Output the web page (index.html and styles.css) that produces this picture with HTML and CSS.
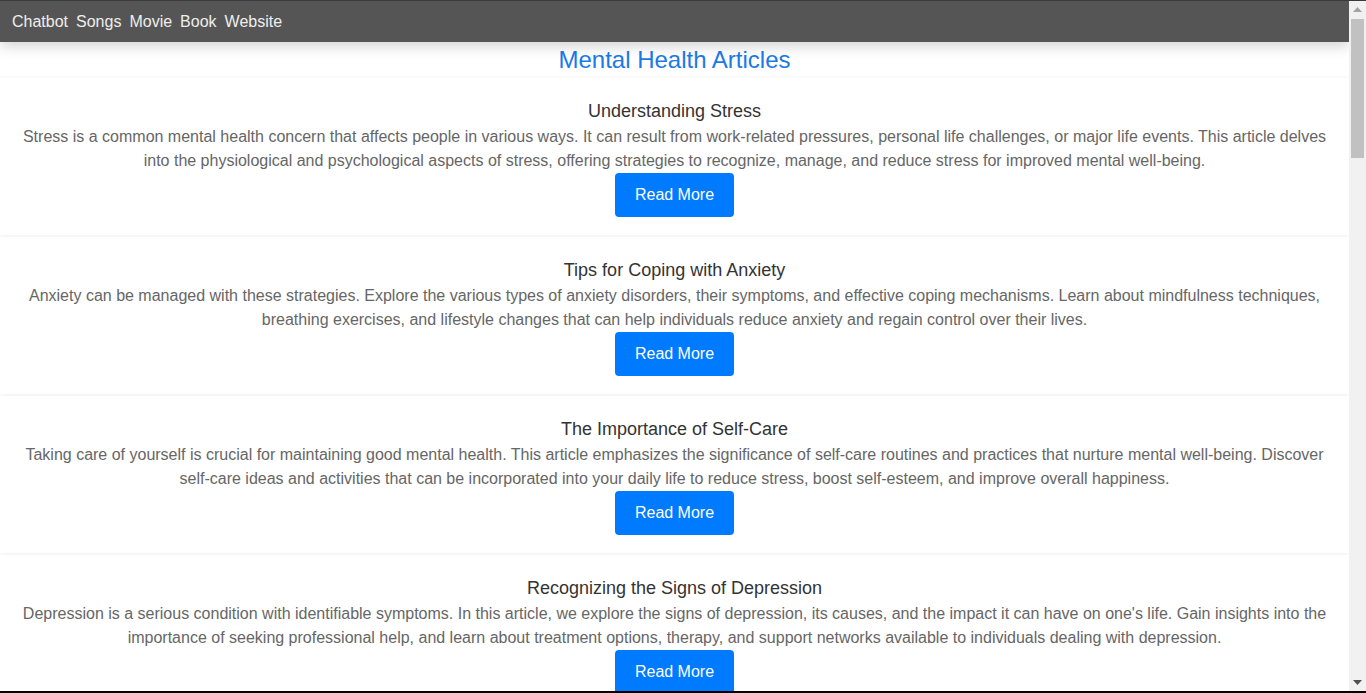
FILE: index.html
```html
<!DOCTYPE html>
<html lang="en">
<head>
<meta charset="utf-8">
<title>Mental Health Articles</title>
<link rel="stylesheet" href="styles.css">
</head>
<body>
<div class="frame">
<div class="viewport">
<nav class="navbar">
  <a href="#">Chatbot</a>
  <a href="#">Songs</a>
  <a href="#">Movie</a>
  <a href="#">Book</a>
  <a href="#">Website</a>
</nav>
<main class="content">
  <h1 class="page-title">Mental Health Articles</h1>
  <section class="article">
    <h3>Understanding Stress</h3>
    <p>Stress is a common mental health concern that affects people in various ways. It can result from work-related pressures, personal life challenges, or major life events. This article delves into the physiological and psychological aspects of stress, offering strategies to recognize, manage, and reduce stress for improved mental well-being.</p>
    <a class="btn" href="#">Read More</a>
  </section>
  <section class="article">
    <h3>Tips for Coping with Anxiety</h3>
    <p>Anxiety can be managed with these strategies. Explore the various types of anxiety disorders, their symptoms, and effective coping mechanisms. Learn about mindfulness techniques, breathing exercises, and lifestyle changes that can help individuals reduce anxiety and regain control over their lives.</p>
    <a class="btn" href="#">Read More</a>
  </section>
  <section class="article">
    <h3>The Importance of Self-Care</h3>
    <p>Taking care of yourself is crucial for maintaining good mental health. This article emphasizes the significance of self-care routines and practices that nurture mental well-being. Discover self-care ideas and activities that can be incorporated into your daily life to reduce stress, boost self-esteem, and improve overall happiness.</p>
    <a class="btn" href="#">Read More</a>
  </section>
  <section class="article">
    <h3>Recognizing the Signs of Depression</h3>
    <p>Depression is a serious condition with identifiable symptoms. In this article, we explore the signs of depression, its causes, and the impact it can have on one's life. Gain insights into the importance of seeking professional help, and learn about treatment options, therapy, and support networks available to individuals dealing with depression.</p>
    <a class="btn" href="#">Read More</a>
  </section>
  <section class="article">
    <h3>Building Resilience</h3>
    <p>Resilience helps people adapt to adversity and bounce back from difficult experiences. This article looks at the habits and mindsets that strengthen resilience, from building supportive relationships to practicing self-compassion and setting realistic goals for the future.</p>
    <a class="btn" href="#">Read More</a>
  </section>
  <section class="article">
    <h3>The Power of Mindfulness</h3>
    <p>Mindfulness is the practice of paying attention to the present moment without judgment. Learn how simple daily mindfulness exercises can reduce stress, improve focus, and help you respond to difficult thoughts and emotions with greater calm and clarity.</p>
    <a class="btn" href="#">Read More</a>
  </section>
  <section class="article">
    <h3>Sleep and Mental Health</h3>
    <p>Sleep and mental health are closely connected. Poor sleep can worsen anxiety and depression, while good sleep supports emotional balance. Discover practical sleep hygiene tips and routines that can help you rest better and wake up feeling refreshed and ready for the day.</p>
    <a class="btn" href="#">Read More</a>
  </section>
  <section class="article">
    <h3>Exercise and Your Mood</h3>
    <p>Regular physical activity is one of the most effective ways to boost mood and reduce stress. This article explains how exercise affects the brain, and offers simple ways to add movement to your daily routine, whether through walking, yoga, dancing, or team sports.</p>
    <a class="btn" href="#">Read More</a>
  </section>
</main>
</div>
<div class="scrollbar" aria-hidden="true">
  <div class="sb-btn">
    <svg width="9" height="5" viewBox="0 0 9 5"><polygon points="0,5 4.5,0 9,5" fill="#a3a3a3"/></svg>
  </div>
  <div class="sb-track">
    <div class="sb-thumb"></div>
  </div>
  <div class="sb-btn">
    <svg width="9" height="5" viewBox="0 0 9 5"><polygon points="0,0 9,0 4.5,5" fill="#505050"/></svg>
  </div>
</div>
</div>
</body>
</html>
```

FILE: styles.css
```css
html, body {
  margin: 0;
  padding: 0;
  height: 100%;
  overflow: hidden;
}

body {
  font-family: "Liberation Sans", Arial, sans-serif;
  background: #ffffff;
  color: #333333;
}

.frame {
  display: flex;
  height: 100vh;
  box-sizing: border-box;
  border-top: 1px solid #3a3a3a;
  border-bottom: 2px solid #000000;
}

.viewport {
  flex: 1;
  min-width: 0;
  overflow: hidden;
}

.scrollbar {
  width: 17px;
  flex: none;
  display: flex;
  flex-direction: column;
  background: #f1f1f1;
}

.sb-btn {
  height: 17px;
  display: flex;
  align-items: center;
  justify-content: center;
}

.sb-btn svg {
  display: block;
}

.sb-track {
  flex: 1;
  padding: 1px 2px 0;
}

.sb-thumb {
  height: 139px;
  background: #c1c1c1;
}

.navbar {
  display: flex;
  align-items: center;
  gap: 8px;
  height: 41px;
  padding: 0 12px;
  background: #555555;
  box-shadow: 0 4px 14px rgba(0, 0, 0, 0.18);
  position: relative;
  z-index: 2;
}

.navbar a {
  color: #eeeeee;
  text-decoration: none;
  font-size: 16px;
}

.content {
  display: flex;
  flex-direction: column;
  gap: 2px;
}

.page-title {
  margin: 0;
  padding: 5px 0 3px;
  text-align: center;
  font-size: 24px;
  font-weight: normal;
  color: #1a7ae6;
  line-height: 26px;
}

.article {
  display: flex;
  flex-direction: column;
  align-items: center;
  padding: 22px 20px 18px;
  background: #ffffff;
  box-shadow: 0 0 4px rgba(0, 0, 0, 0.06);
  text-align: center;
}

.article h3 {
  margin: 0 0 3px;
  font-size: 18px;
  font-weight: normal;
  line-height: 22px;
  color: #333333;
}

.article p {
  margin: 0;
  font-size: 16px;
  line-height: 24px;
  color: #666666;
}

.btn {
  display: inline-block;
  padding: 12px 20px;
  line-height: 20px;
  font-size: 16px;
  color: #ffffff;
  background: #007bff;
  border-radius: 4px;
  text-decoration: none;
}
```
